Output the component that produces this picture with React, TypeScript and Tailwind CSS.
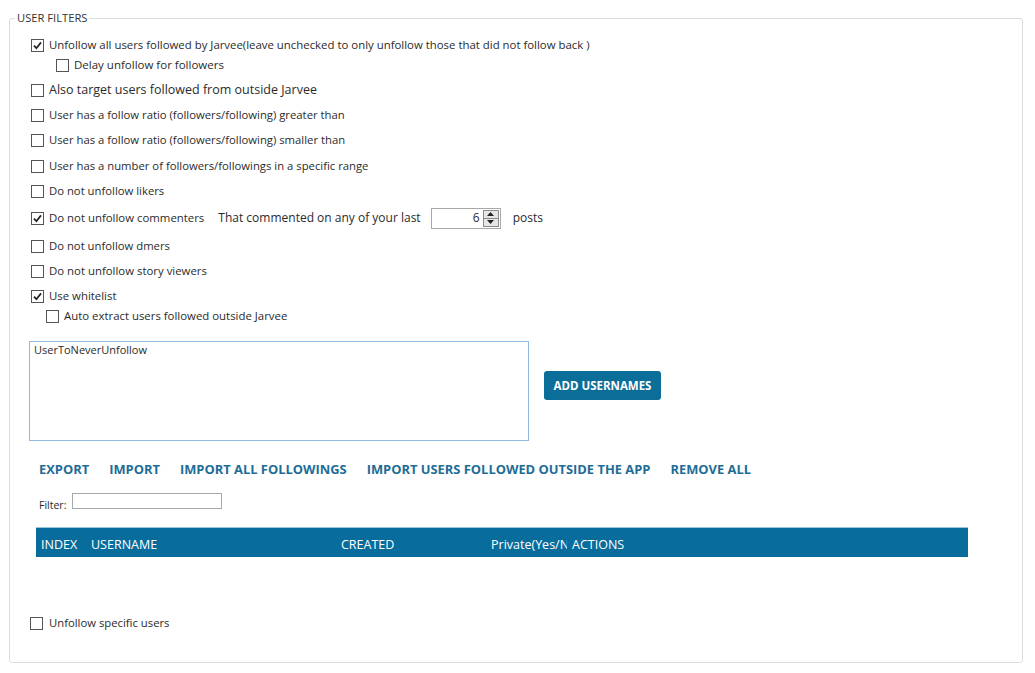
import React from "react";

function Box({ checked = false }: { checked?: boolean }) {
  return (
    <span className="inline-flex h-[13px] w-[13px] shrink-0 items-center justify-center border border-[#555] bg-white">
      {checked && (
        <svg width="9" height="9" viewBox="0 0 9 9">
          <path d="M1 4.6 L3.4 7.2 L8 1.4" fill="none" stroke="#222" strokeWidth="1.7" />
        </svg>
      )}
    </span>
  );
}

export default function App() {
  return (
    <div
      className="h-[673px] w-[1035px] bg-white text-[#2b2b2b]"
      style={{ fontFamily: '"Open Sans", "Noto Sans", sans-serif' }}
    >
      <div className="pl-[9px] pt-[18px]">
        <div className="relative h-[645px] w-[1014px] rounded-[3px] border border-[#d9dde1] pl-[21px] pt-[16px]">
          <span className="absolute left-[5px] top-[-9px] bg-white px-[2px] text-[11.2px] leading-[16px] text-[#333]">
            USER FILTERS
          </span>

          <div className="flex h-5 items-center gap-[5px] text-[11.4px]">
            <Box checked />
            <span>Unfollow all users followed by Jarvee(leave unchecked to only unfollow those that did not follow back )</span>
          </div>
          <div className="flex h-5 items-center gap-[5px] pl-[25px] text-[11.5px]">
            <Box />
            <span>Delay unfollow for followers</span>
          </div>
          <div className="mt-[5px] flex h-5 items-center gap-[5px] text-[12.5px]">
            <Box />
            <span>Also target users followed from outside Jarvee</span>
          </div>
          <div className="mt-[5px] flex h-5 items-center gap-[5px] text-[11.3px]">
            <Box />
            <span>User has a follow ratio (followers/following) greater than</span>
          </div>
          <div className="mt-[5px] flex h-5 items-center gap-[5px] text-[11.3px]">
            <Box />
            <span>User has a follow ratio (followers/following) smaller than</span>
          </div>
          <div className="mt-[6px] flex h-5 items-center gap-[5px] text-[11.3px]">
            <Box />
            <span>User has a number of followers/followings in a specific range</span>
          </div>
          <div className="mt-[5px] flex h-5 items-center gap-[5px] text-[11.3px]">
            <Box />
            <span>Do not unfollow likers</span>
          </div>
          <div className="mt-[6px] flex h-[22px] items-center text-[11.4px]">
            <Box checked />
            <span className="ml-[5px]">Do not unfollow commenters</span>
            <span className="ml-[14px] text-[12px]">That commented on any of your last</span>
            <div className="ml-[10px] flex h-[21px] w-[70px] items-stretch border border-[#a9a9a9] bg-white">
              <span className="flex flex-1 items-center justify-end pr-[3px] text-[12px]">6</span>
              <div className="my-[1px] mr-[1px] flex w-[16px] flex-col border border-[#8a8a8a] bg-[#e6e6e6]">
                <div className="flex flex-1 items-center justify-center border-b border-[#8a8a8a]">
                  <svg width="7" height="4" viewBox="0 0 7 4"><path d="M0 4 L3.5 0 L7 4Z" fill="#222" /></svg>
                </div>
                <div className="flex flex-1 items-center justify-center">
                  <svg width="7" height="4" viewBox="0 0 7 4"><path d="M0 0 L3.5 4 L7 0Z" fill="#222" /></svg>
                </div>
              </div>
            </div>
            <span className="ml-[12px] text-[12px]">posts</span>
          </div>
          <div className="mt-[7px] flex h-5 items-center gap-[5px] text-[11.3px]">
            <Box />
            <span>Do not unfollow dmers</span>
          </div>
          <div className="mt-[5px] flex h-5 items-center gap-[5px] text-[11.4px]">
            <Box />
            <span>Do not unfollow story viewers</span>
          </div>
          <div className="mt-[5px] flex h-5 items-center gap-[5px] text-[11.4px]">
            <Box checked />
            <span>Use whitelist</span>
          </div>
          <div className="flex h-5 items-center gap-[5px] pl-[15px] text-[11.4px]">
            <Box />
            <span>Auto extract users followed outside Jarvee</span>
          </div>

          <div className="ml-[-2px] mt-[15px] flex items-start">
            <div className="h-[100px] w-[500px] border border-[#8fbbe3] px-[4px] py-0 text-[11px]">
              UserToNeverUnfollow
            </div>
            <button className="ml-[15px] mt-[30px] h-[29px] w-[117px] rounded-[3px] bg-[#0b6e99] text-[11.5px] font-bold text-white">
              ADD USERNAMES
            </button>
          </div>

          <div className="ml-[8px] mt-[19px] flex h-5 items-center gap-[20px] text-[12.9px] font-bold text-[#1d6d96]">
            <span>EXPORT</span>
            <span>IMPORT</span>
            <span>IMPORT ALL FOLLOWINGS</span>
            <span>IMPORT USERS FOLLOWED OUTSIDE THE APP</span>
            <span>REMOVE ALL</span>
          </div>

          <div className="ml-[8px] mt-[13px] flex h-[16px] items-center gap-[6px] text-[10.5px]">
            <span className="mt-[10px]">Filter:</span>
            <div className="h-[16px] w-[150px] border border-[#a9a9a9] bg-white" />
          </div>

          <div className="ml-[5px] mt-[18px] flex h-[30px] w-[932px] items-start border-t border-[#9cc4d8] bg-[#086d9c] pt-[8px] text-[12.5px] leading-[18px] text-white">
            <span className="w-[55px] shrink-0 pl-[5px]">INDEX</span>
            <span className="w-[250px] shrink-0">USERNAME</span>
            <span className="w-[150px] shrink-0">CREATED</span>
            <span className="w-[76px] shrink-0 overflow-hidden whitespace-nowrap">Private(Yes/No)</span>
            <span className="ml-[5px]">ACTIONS</span>
          </div>

          <div className="ml-[-1px] mt-[56px] flex h-5 items-center gap-[6px] text-[11.3px]">
            <Box />
            <span>Unfollow specific users</span>
          </div>
        </div>
      </div>
    </div>
  );
}
